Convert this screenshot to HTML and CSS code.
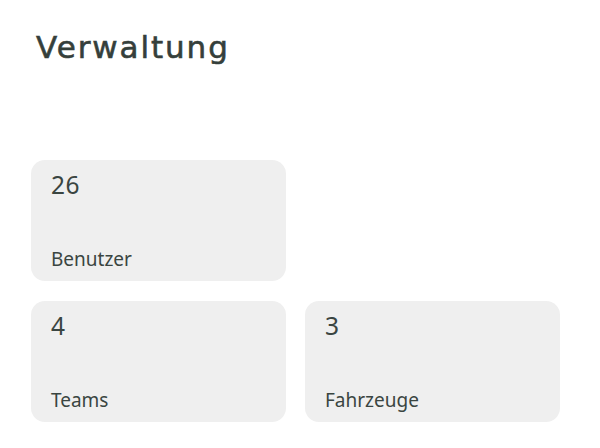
FILE: index.html
```html
<!DOCTYPE html>
<html lang="de">
<head>
<meta charset="utf-8">
<title>Verwaltung</title>
<link rel="stylesheet" href="styles.css">
</head>
<body>
<main class="page">
  <h1 class="title">Verwaltung</h1>
  <section class="stats">
    <div class="card">
      <div class="value">26</div>
      <div class="label">Benutzer</div>
    </div>
    <div class="spacer"></div>
    <div class="card">
      <div class="value">4</div>
      <div class="label">Teams</div>
    </div>
    <div class="card">
      <div class="value">3</div>
      <div class="label">Fahrzeuge</div>
    </div>
  </section>
</main>
</body>
</html>
```
FILE: styles.css
```css
html, body {
  margin: 0;
  padding: 0;
  background: #ffffff;
}

.page {
  padding: 27px 0 0 31px;
  color: #34403c;
}

.title {
  margin: 0 0 93px 5px;
  font-family: "DejaVu Sans", sans-serif;
  font-weight: 400;
  font-size: 31px;
  line-height: 40px;
  letter-spacing: 1.9px;
  color: #353f3b;
  -webkit-text-stroke: 0.6px #353f3b;
}

.stats {
  display: grid;
  grid-template-columns: 255px 255px;
  column-gap: 19px;
  row-gap: 20px;
}

.card {
  height: 121px;
  box-sizing: border-box;
  padding: 9px 20px 10px;
  background: #efefef;
  border-radius: 14px;
  display: flex;
  flex-direction: column;
  justify-content: space-between;
  font-family: "Noto Sans", sans-serif;
  color: #3a4541;
}

.value {
  font-size: 24.5px;
  line-height: 32px;
  letter-spacing: 0.5px;
}

.label {
  font-size: 19px;
  line-height: 24px;
}
```
